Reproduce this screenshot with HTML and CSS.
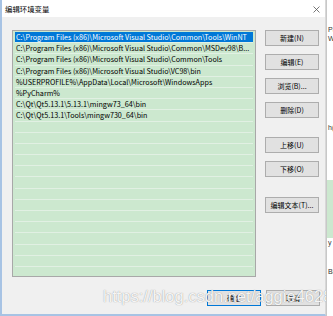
FILE: index.html
```html
<!DOCTYPE html>
<html lang="zh-CN">
<head>
  <meta charset="UTF-8">
  <title>编辑环境变量</title>
  <link rel="stylesheet" href="styles.css">
</head>
<body>
  <div class="screen">
    <div class="dialog">
      <div class="titlebar">
        <span class="title">编辑环境变量</span>
        <svg class="close" width="7" height="7" viewBox="0 0 7 7">
          <path d="M0.5 0.5 L6.5 6.5 M6.5 0.5 L0.5 6.5" stroke="#555" stroke-width="0.8" fill="none"/>
        </svg>
      </div>
      <div class="content">
        <div class="main">
          <div class="path-list" id="pathList"></div>
          <div class="side-buttons">
            <button class="btn">新建(N)</button>
            <button class="btn">编辑(E)</button>
            <button class="btn">浏览(B)...</button>
            <button class="btn">删除(D)</button>
            <button class="btn btn-group">上移(U)</button>
            <button class="btn">下移(O)</button>
            <button class="btn btn-group2">编辑文本(T)...</button>
          </div>
        </div>
        <div class="footer">
          <button class="btn btn-default">确定</button>
          <button class="btn">取消</button>
        </div>
      </div>
      <div class="watermark">https://blog.csdn.net/aggie4628</div>
    </div>
    <div class="behind">
      <div class="behind-text t1">Pa</div>
      <div class="behind-text t3">W</div>
      <div class="behind-text t4">h(</div>
      <div class="behind-green"></div>
      <div class="behind-text t5">y</div>
      <div class="behind-text t6">Bi</div>
    </div>
  </div>

  <script>
    // 环境变量列表
    const paths = [
      "C:\\Program Files (x86)\\Microsoft Visual Studio\\Common\\Tools\\WinNT",
      "C:\\Program Files (x86)\\Microsoft Visual Studio\\Common\\MSDev98\\B...",
      "C:\\Program Files (x86)\\Microsoft Visual Studio\\Common\\Tools",
      "C:\\Program Files (x86)\\Microsoft Visual Studio\\VC98\\bin",
      "%USERPROFILE%\\AppData\\Local\\Microsoft\\WindowsApps",
      "%PyCharm%",
      "C:\\Qt\\Qt5.13.1\\5.13.1\\mingw73_64\\bin",
      "C:\\Qt\\Qt5.13.1\\Tools\\mingw730_64\\bin"
    ];
    const totalRows = 22;

    const list = document.getElementById('pathList');
    for (let i = 0; i < totalRows; i++) {
      const row = document.createElement('div');
      row.className = 'path-row' + (i === 0 ? ' selected' : '');
      row.textContent = paths[i] || '';
      list.appendChild(row);
    }
  </script>
</body>
</html>
```

FILE: styles.css
```css
* {
  margin: 0;
  padding: 0;
  box-sizing: border-box;
}

body {
  width: 333px;
  height: 316px;
  overflow: hidden;
  background-color: #fff;
  font-family: "Noto Sans CJK SC", sans-serif;
}

.screen {
  display: flex;
  height: 316px;
}

.dialog {
  position: relative;
  width: 326px;
  height: 316px;
  flex-shrink: 0;
  background-color: #f0f0f0;
  border-left: 2px solid #a7c3e4;
  border-bottom: 2px solid #a7c3e4;
  border-right: 1px solid #d8d8d8;
  display: flex;
  flex-direction: column;
}

.titlebar {
  height: 17px;
  background-color: #fff;
  display: flex;
  align-items: center;
  justify-content: space-between;
  padding: 0 5px 0 3px;
}

.title {
  font-size: 7.4px;
  color: #000;
}

.close {
  margin-top: 1px;
}

.content {
  flex: 1;
  padding: 13px 0 0 10px;
}

.main {
  display: flex;
  align-items: flex-start;
}

.path-list {
  width: 244px;
  height: 247px;
  border: 1px solid #a8a8a8;
  background-color: #cce8cf;
  padding: 1px 2px;
  overflow: hidden;
}

.path-row {
  height: 11.2px;
  line-height: 10.2px;
  font-size: 7.2px;
  padding-left: 1px;
  white-space: nowrap;
  color: #000;
  border-bottom: 1px solid #e1f0e3;
}

.path-row.selected {
  background-color: #0078d7;
  color: #fff;
}

.side-buttons {
  display: flex;
  flex-direction: column;
  gap: 8px;
  margin-left: 9px;
}

.btn {
  width: 54px;
  height: 16px;
  font-family: "Noto Sans CJK SC", sans-serif;
  font-size: 7px;
  color: #000;
  background-color: #e1e1e1;
  border: 1px solid #adadad;
}

.btn-group {
  margin-top: 11px;
}

.btn-group2 {
  margin-top: 12px;
}

.footer {
  display: flex;
  justify-content: flex-end;
  gap: 5px;
  margin-top: 13px;
  padding-right: 5px;
}

.footer .btn {
  width: 54px;
  height: 16px;
}

.btn-default {
  border-color: #0078d7;
}

.watermark {
  position: absolute;
  left: 101px;
  top: 287px;
  font-family: "Liberation Sans", sans-serif;
  font-size: 16.5px;
  color: rgba(255, 255, 255, 0.92);
  text-shadow: 0 0 1px rgba(110, 110, 110, 0.8);
  white-space: nowrap;
}

.behind {
  position: relative;
  flex: 1;
  background-color: #fff;
  border-left: 1px solid #c8c8c8;
}

.behind-text {
  position: absolute;
  left: 1px;
  font-family: "Liberation Sans", sans-serif;
  font-size: 7px;
  line-height: 8px;
  color: #333;
}

.t1 { top: 26px; }
.t3 { top: 35px; }
.t4 { top: 124px; }
.t5 { top: 239px; }
.t6 { top: 268px; }

.behind-green {
  position: absolute;
  left: 0;
  right: 0;
  top: 180px;
  height: 58px;
  background-color: #cce8cf;
}
```
